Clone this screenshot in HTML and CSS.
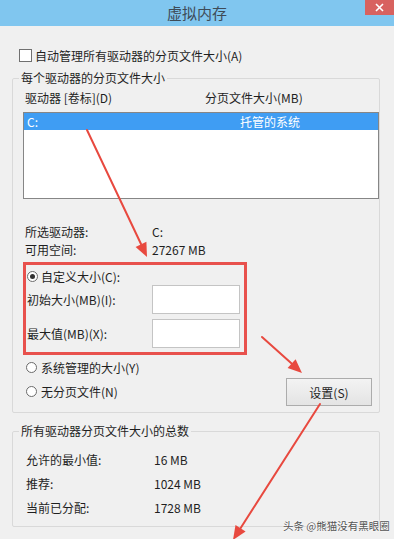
FILE: index.html
```html
<!DOCTYPE html>
<html lang="zh">
<head>
    <meta charset="UTF-8">
    <title>虚拟内存</title>
    <link rel="stylesheet" href="styles.css">
</head>
<body>
<div class="window">
    <div class="titlebar">
        <div class="title">虚拟内存</div>
        <div class="close">
            <svg width="9" height="9" viewBox="0 0 9 9"><path d="M1 1L8 8M8 1L1 8" stroke="#fff" stroke-width="1.6"/></svg>
        </div>
    </div>

    <div class="content">
        <div class="check-row"><span class="checkbox"></span>自动管理所有驱动器的分页文件大小(A)</div>

        <fieldset class="group group-drives">
            <legend>每个驱动器的分页文件大小</legend>
            <div class="list-head">
                <span class="col-drive">驱动器 [卷标](D)</span>
                <span>分页文件大小(MB)</span>
            </div>
            <div class="listbox">
                <div class="list-item">
                    <span class="col-item">C:</span>
                    <span>托管的系统</span>
                </div>
            </div>

            <div class="info-row info-first"><span class="info-label">所选驱动器:</span><span>C:</span></div>
            <div class="info-row"><span class="info-label">可用空间:</span><span>27267 MB</span></div>

            <!-- 自定义大小 -->
            <div class="custom-box">
                <div class="radio-row"><span class="radio checked"></span>自定义大小(C):</div>
                <div class="field-row"><span class="field-label">初始大小(MB)(I):</span><span class="field"></span></div>
                <div class="field-row"><span class="field-label">最大值(MB)(X):</span><span class="field"></span></div>
            </div>

            <div class="bottom-row">
                <div class="radios">
                    <div class="radio-row"><span class="radio"></span>系统管理的大小(Y)</div>
                    <div class="radio-row"><span class="radio"></span>无分页文件(N)</div>
                </div>
                <button class="btn">设置(S)</button>
            </div>
        </fieldset>

        <fieldset class="group group-total">
            <legend>所有驱动器分页文件大小的总数</legend>
            <div class="total-list">
                <div class="total-row"><span class="total-label">允许的最小值:</span><span>16 MB</span></div>
                <div class="total-row"><span class="total-label">推荐:</span><span>1024 MB</span></div>
                <div class="total-row"><span class="total-label">当前已分配:</span><span>1728 MB</span></div>
            </div>
        </fieldset>
    </div>

    <div class="watermark">头条 @熊猫没有黑眼圈</div>

    <!-- 标注箭头 -->
    <svg class="marks" width="394" height="539" viewBox="0 0 394 539">
        <g stroke="#e8493f" stroke-width="2" fill="#e8493f" stroke-linecap="round">
            <line x1="87" y1="130" x2="141" y2="244"/>
            <polygon stroke="none" points="147,257 135.6,246.9 146.4,241.7"/>
            <line x1="262" y1="337" x2="291.6" y2="363.6"/>
            <polygon stroke="none" points="302,373 287.6,368.1 295.6,359.2"/>
            <line x1="320" y1="404" x2="240.5" y2="528.2"/>
            <polygon stroke="none" points="233,540 235.5,525 245.6,531.4"/>
        </g>
    </svg>
</div>
</body>
</html>
```

FILE: styles.css
```css
body {
    margin: 0;
    background: #f0f0f0;
    font-family: "Noto Sans CJK SC", "Noto Sans", sans-serif;
    font-size: 12px;
    color: #1f1f1f;
}

.window {
    position: relative;
    width: 394px;
    height: 539px;
    overflow: hidden;
}

.titlebar {
    display: flex;
    height: 26px;
    background: #80c6ef;
}

.title {
    flex: 1;
    padding-left: 29px;
    text-align: center;
    font-size: 15px;
    line-height: 26px;
    color: #3e4b57;
}

.close {
    width: 29px;
    height: 15px;
    background: #d8625f;
    display: flex;
    align-items: center;
    justify-content: center;
}

.content {
    padding: 0 14px 0 12px;
}

.check-row {
    display: flex;
    align-items: center;
    height: 18px;
    margin-top: 20px;
    padding-left: 7px;
}

.checkbox {
    width: 13px;
    height: 13px;
    box-sizing: border-box;
    border: 1px solid #707070;
    background: #fff;
    margin-right: 3px;
}

.group {
    margin: 6px 0 0;
    padding: 4px 0 6px 10px;
    border: 1px solid #d9d9d9;
    border-radius: 2px;
    min-width: 0;
}

.group legend {
    padding: 0 2px;
    margin-left: -4px;
    line-height: 16px;
}

.list-head {
    display: flex;
    line-height: 16px;
    padding-left: 2px;
}

.col-drive {
    width: 180px;
}

.listbox {
    margin-top: 6px;
    height: 87px;
    box-sizing: border-box;
    border: 1px solid #868686;
    background: #fff;
}

.list-item {
    display: flex;
    height: 17px;
    line-height: 17px;
    padding-left: 3px;
    background: #3f9df3;
    color: #fff;
}

.col-item {
    width: 213px;
}

.info-row {
    display: flex;
    line-height: 18px;
    padding-left: 2px;
}

.info-first {
    margin-top: 24px;
}

.info-label {
    width: 127px;
}

.custom-box {
    width: 224px;
    box-sizing: border-box;
    margin-top: 3px;
    border: 3px solid #e8514d;
    padding: 2px 0 4px 1px;
}

.radio-row {
    display: flex;
    align-items: center;
    height: 18px;
}

.radio {
    width: 11px;
    height: 11px;
    box-sizing: border-box;
    border: 1px solid #6b6b6b;
    border-radius: 50%;
    background: #fff;
    margin-right: 3px;
    display: flex;
    align-items: center;
    justify-content: center;
}

.radio.checked::after {
    content: "";
    width: 5px;
    height: 5px;
    border-radius: 50%;
    background: #333;
}

.field-row {
    display: flex;
    align-items: center;
}

.field-row + .field-row {
    margin-top: 5px;
}

.field-label {
    width: 125px;
}

.field {
    width: 88px;
    height: 29px;
    box-sizing: border-box;
    border: 1px solid #c4c4c4;
    background: #fff;
}

.bottom-row {
    display: flex;
    justify-content: space-between;
    margin-top: 3px;
}

.radios {
    display: flex;
    flex-direction: column;
    gap: 6px;
    padding-left: 3px;
}

.radios .radio {
    margin-right: 4px;
}

.btn {
    margin: 20px 7px 0 0;
    width: 86px;
    height: 28px;
    padding: 0;
    border: 1px solid #acacac;
    background: linear-gradient(#f3f3f3, #e4e4e4);
    font: inherit;
    color: inherit;
}

.group-total {
    margin-top: 10px;
    padding: 12px 0 9px 13px;
}

.group-total legend {
    margin-left: -7px;
}

.total-list {
    display: flex;
    flex-direction: column;
    gap: 6px;
}

.total-row {
    display: flex;
    line-height: 18px;
}

.total-label {
    width: 128px;
}

.watermark {
    position: absolute;
    left: 283px;
    top: 518px;
    font-size: 10.5px;
    line-height: 16px;
    color: #555;
    text-shadow: 0 0 2px #fff, 0 0 2px #fff;
}

.marks {
    position: absolute;
    left: 0;
    top: 0;
    pointer-events: none;
}
```
